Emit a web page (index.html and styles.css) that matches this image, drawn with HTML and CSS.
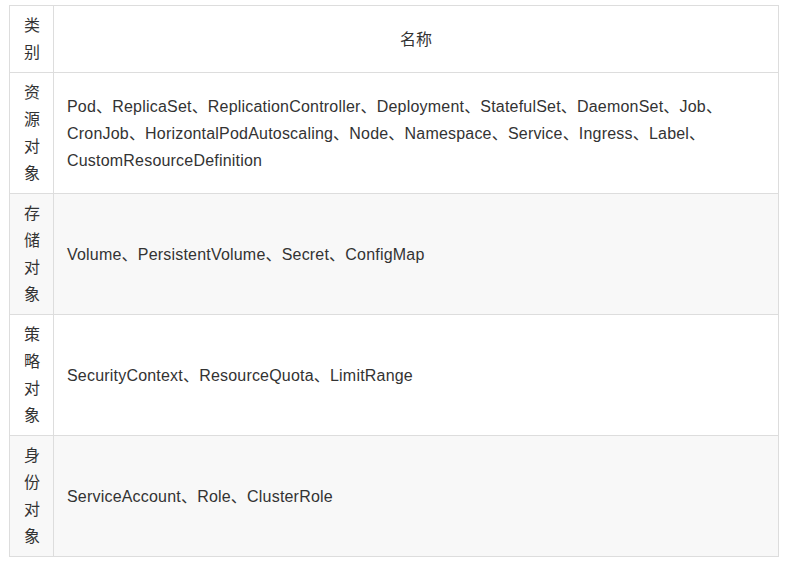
FILE: index.html
```html
<!DOCTYPE html>
<html lang="zh">
<head>
<meta charset="utf-8">
<link rel="stylesheet" href="styles.css">
</head>
<body>
<table class="tbl">
  <colgroup><col class="c1"><col class="c2"></colgroup>
  <thead>
    <tr><th class="cat">类别</th><th class="name">名称</th></tr>
  </thead>
  <tbody>
    <tr><td class="cat">资源对象</td><td class="val">Pod、ReplicaSet、ReplicationController、Deployment、StatefulSet、DaemonSet、Job、CronJob、HorizontalPodAutoscaling、Node、Namespace、Service、Ingress、Label、CustomResourceDefinition</td></tr>
    <tr class="alt"><td class="cat">存储对象</td><td class="val">Volume、PersistentVolume、Secret、ConfigMap</td></tr>
    <tr><td class="cat">策略对象</td><td class="val">SecurityContext、ResourceQuota、LimitRange</td></tr>
    <tr class="alt"><td class="cat">身份对象</td><td class="val">ServiceAccount、Role、ClusterRole</td></tr>
  </tbody>
</table>
</body>
</html>
```
FILE: styles.css
```css
html, body { background: #fff; }
body {
  margin: 5px 0 0 9px;
  font-family: "Liberation Sans", "Noto Sans CJK SC", sans-serif;
  font-size: 16px;
  line-height: 27px;
  color: #333;
}
.tbl {
  border-collapse: collapse;
  width: 770px;
  table-layout: fixed;
}
.c1 { width: 44px; }
.tbl th, .tbl td {
  border: 1px solid #ddd;
  padding: 6px 13px;
  text-align: left;
  vertical-align: middle;
  font-weight: normal;
}
.tbl th.name { text-align: center; }
.tbl .val { letter-spacing: 0.2px; }
.tbl .cat { padding: 6px 14px; word-break: break-all; }
.alt td { background: #f8f8f8; }
```
